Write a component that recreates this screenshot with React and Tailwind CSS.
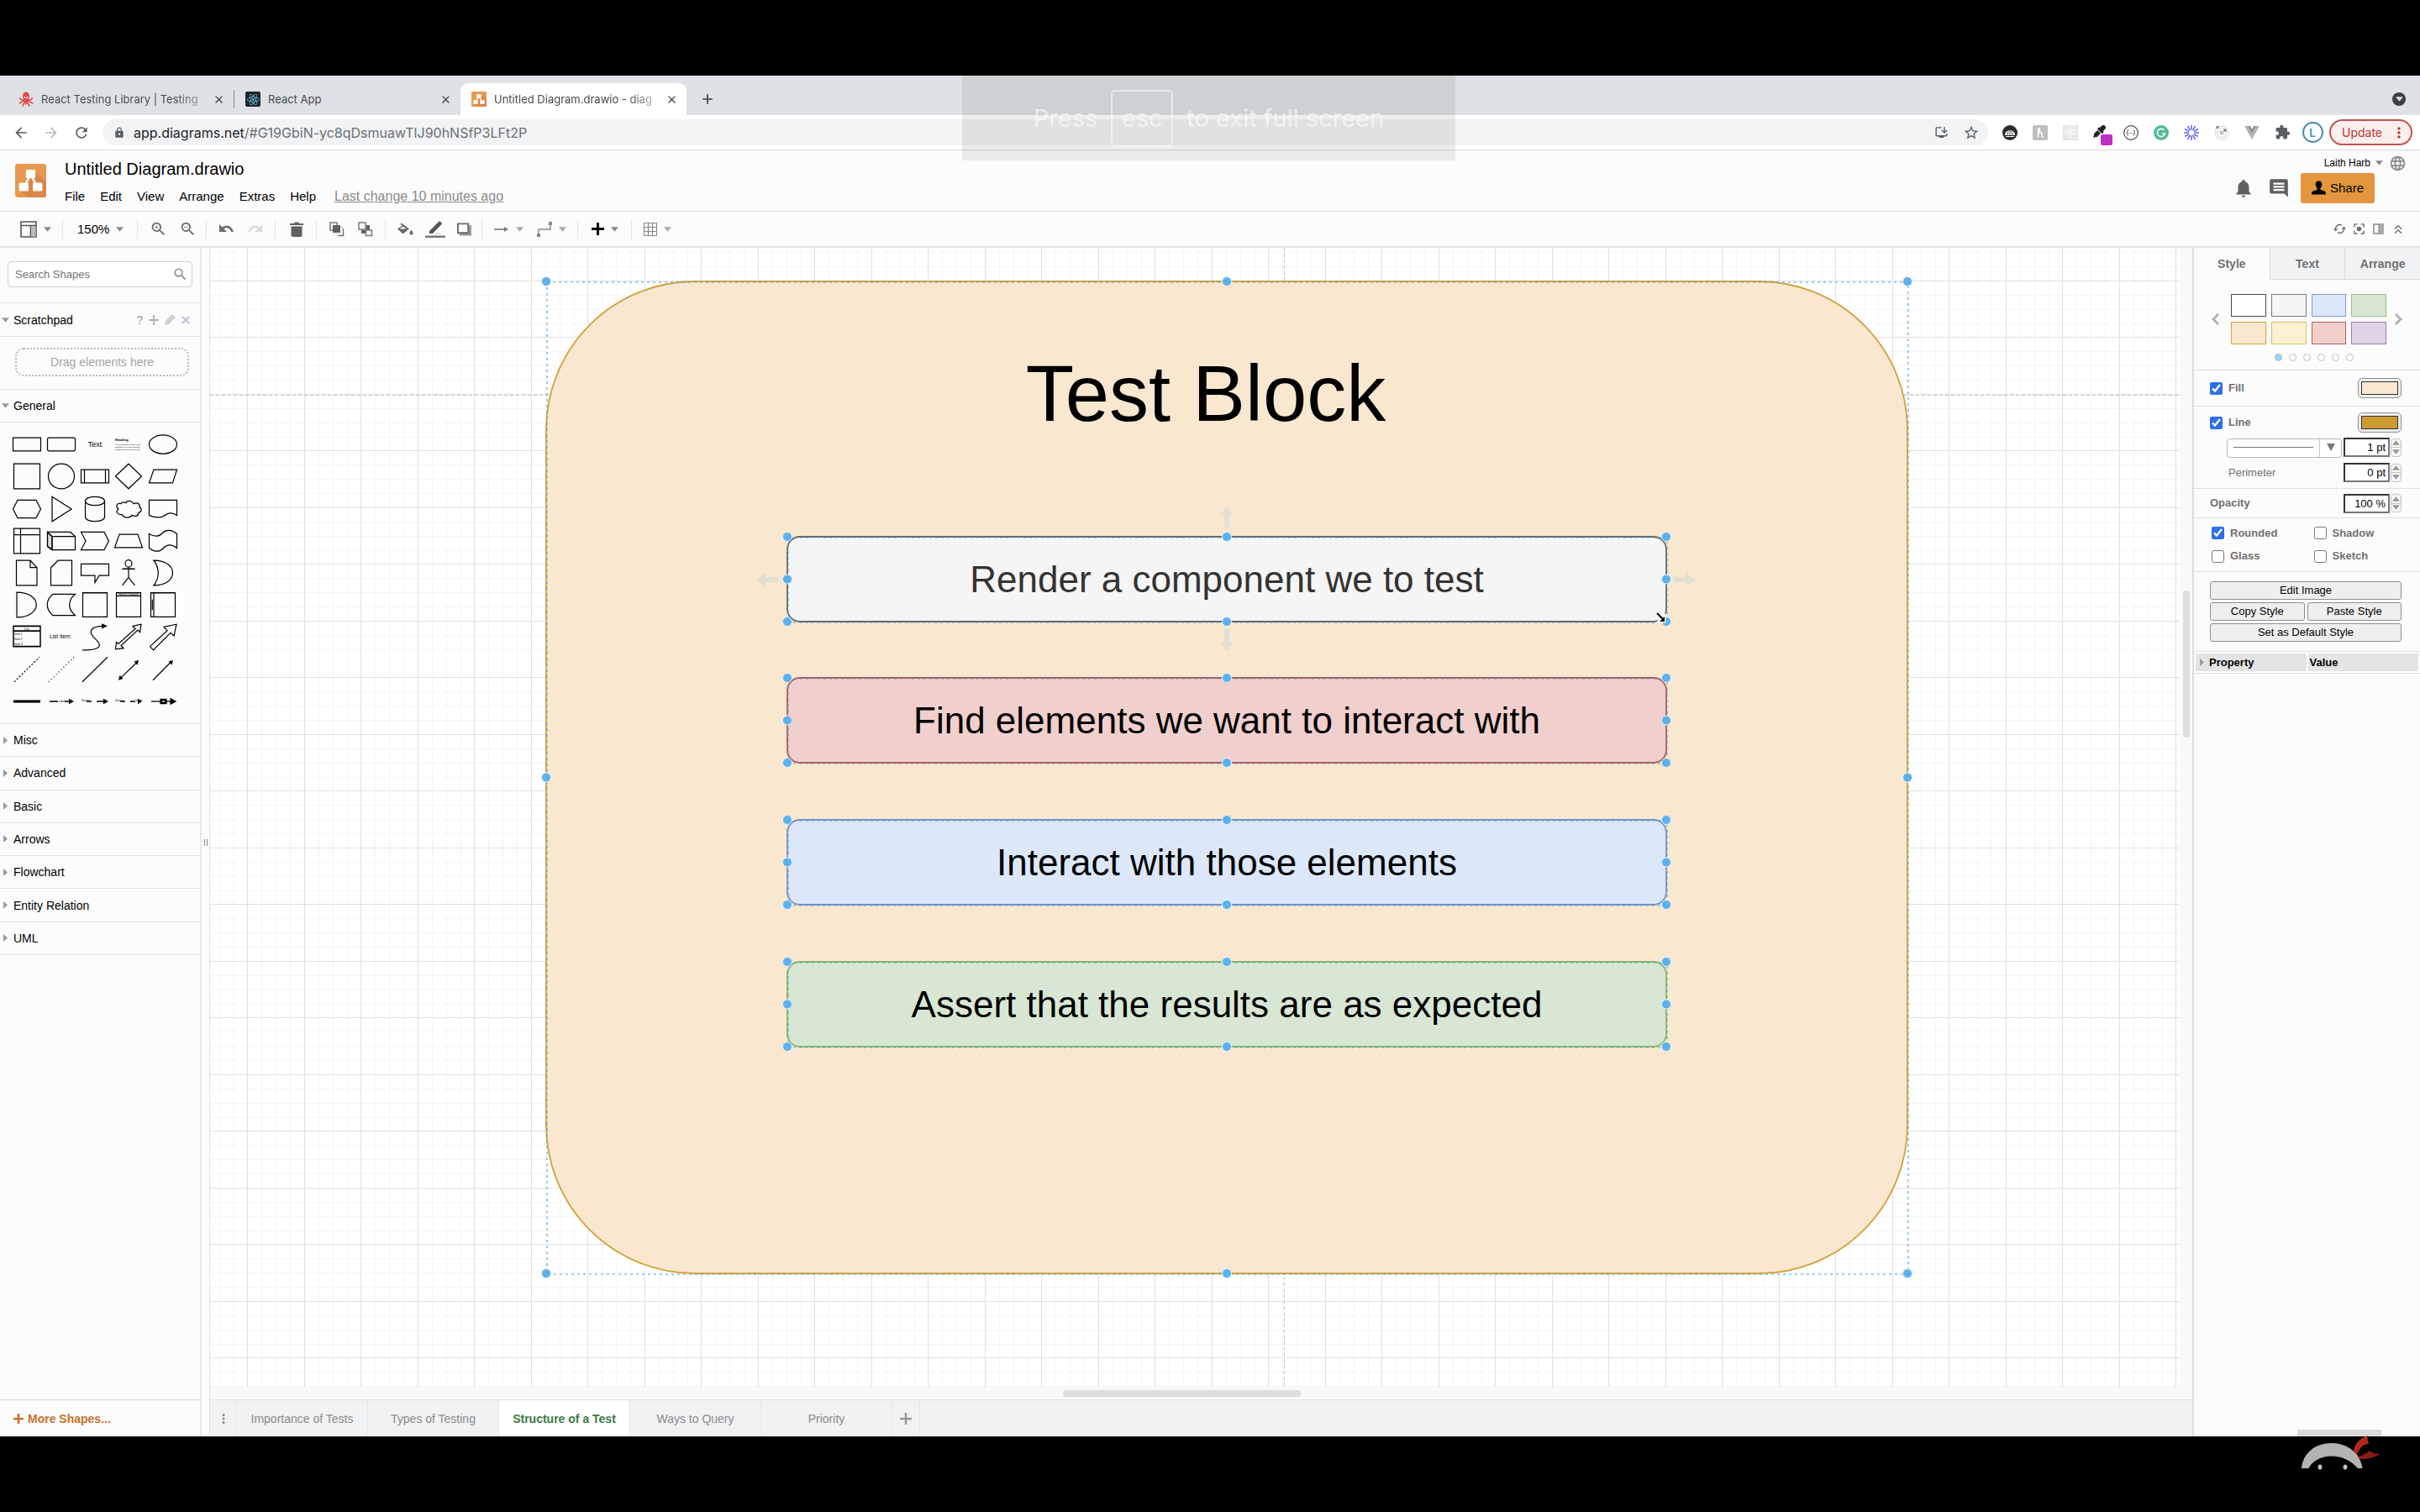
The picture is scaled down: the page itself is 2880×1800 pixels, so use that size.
import React from "react";
import {
  MdArrowBack, MdArrowForward, MdRefresh, MdLock, MdInstallDesktop, MdStarBorder, MdExtension,
  MdNotifications, MdLanguage, MdUndo, MdRedo, MdZoomIn, MdZoomOut, MdSync, MdCenterFocusStrong,
  MdKeyboardDoubleArrowUp, MdClose, MdAdd, MdMoreVert, MdSearch,
} from "react-icons/md";
import { FaReact, FaEyeDropper } from "react-icons/fa";

const chromeFont = "font-['Inter','Liberation_Sans',sans-serif]";
const pageFont = "font-['Liberation_Sans',sans-serif]";

function Caret({ className = "text-[#8a8a8a]" }) {
  return (
    <svg viewBox="0 0 10 6" className={`w-[9px] h-[6px] shrink-0 ${className}`}>
      <path d="M0 0h10L5 6z" fill="currentColor" />
    </svg>
  );
}

function DrawioLogo({ className }) {
  return (
    <svg viewBox="0 0 36 40" preserveAspectRatio="none" className={className}>
      <rect width="36" height="40" rx="3" fill="#e8994f" />
      <path d="M22 8l14 14v15a3 3 0 0 1-3 3H14L6 32l8-8 4-8z" fill="#d98748" />
      <path d="M18 13L10 28M18 13l8 15" stroke="#fff" strokeWidth="2.4" />
      <rect x="12.500" y="7" width="11" height="10" rx="1.500" fill="#fff" />
      <rect x="4.500" y="22.500" width="11" height="10" rx="1.500" fill="#fff" />
      <rect x="20.500" y="22.500" width="11" height="10" rx="1.500" fill="#fff" />
    </svg>
  );
}

function Octopus() {
  return (
    <svg viewBox="0 0 18 18" className="w-[18px] h-[18px] shrink-0" fill="none" stroke="#df4b4b" strokeWidth="1.6" strokeLinecap="round">
      <ellipse cx="9" cy="5.500" rx="4" ry="5" fill="#df4b4b" stroke="none" />
      <path d="M6.500 9C5 11 3 10 1.500 8M11.500 9c1.500 2 3.500 1 5-1M7 10c-1 3-4 2-5.500 4M11 10c1 3 4 2 5.500 4M8 10c0 4-2 4-3 7M10 10c0 4 2 4 3 7M9 10v5" />
      <circle cx="7.500" cy="7" r="0.900" fill="#fff" stroke="none" />
      <circle cx="10.500" cy="7" r="0.900" fill="#fff" stroke="none" />
    </svg>
  );
}

function BrowserTab({ icon, title, active, fade }) {
  return (
    <div className={`flex items-center w-[269px] h-[38px] pl-[13px] pr-[10px] gap-[9px] ${active ? "bg-white rounded-t-[9px]" : ""}`}>
      {icon}
      <span className={`flex-1 text-[13px] leading-[20px] text-[#45494d] whitespace-nowrap ${fade ? "[mask-image:linear-gradient(to_right,black_82%,rgb(0_0_0/0.3))]" : ""}`}>{title}</span>
      <button aria-label="Close tab" className="text-[#3c4043]"><MdClose size={15} /></button>
    </div>
  );
}

function Ext({ name, children }) {
  return <button aria-label={name} className="grid place-items-center w-[36px] h-[30px]">{children}</button>;
}

const rays = [0, 30, 60, 90, 120, 150, 180, 210, 240, 270, 300, 330];

function BrowserChrome() {
  return (
    <div className={chromeFont}>
      <div className="flex items-end h-[47px] bg-[#dee1e5] pl-[9px]">
        <BrowserTab icon={<Octopus />} title="React Testing Library | Testing" fade />
        <span className="w-px h-[22px] bg-[#85888c] mb-[8px]" />
        <BrowserTab
          icon={<span className="grid place-items-center w-[18px] h-[18px] shrink-0 rounded-[2px] bg-[#20232a] text-[#61cbe8]"><FaReact size={15} /></span>}
          title="React App"
        />
        <BrowserTab active fade icon={<DrawioLogo className="w-[18px] h-[18px] shrink-0" />} title="Untitled Diagram.drawio - diag" />
        <button aria-label="New tab" className="h-[38px] ml-[15px] text-[#3c4043]"><MdAdd size={20} /></button>
        <button aria-label="Search tabs" className="ml-auto mr-[17px] self-center mt-[9px] grid place-items-center w-[16px] h-[16px] rounded-full bg-[#3c4043]">
          <Caret className="text-[#dee1e5]" />
        </button>
      </div>

      <div className="flex items-center h-[42px] bg-white border-b border-[#dadcde]">
        <div className="flex items-center w-[122px] pl-[15px] gap-[16px] text-[#5a5e62]">
          <button aria-label="Back"><MdArrowBack size={20} /></button>
          <button aria-label="Forward" className="text-[#b9bbbd]"><MdArrowForward size={20} /></button>
          <button aria-label="Reload"><MdRefresh size={20} /></button>
        </div>
        <div className="flex flex-1 items-center h-[31px] rounded-full bg-[#f1f3f5] pl-[13px] pr-[10px] text-[#5a5e62]">
          <MdLock size={14} />
          <div className="flex-1 pl-[10px] text-[16px] leading-[20px] text-[#6b6f73]">
            <span className="text-[#202124]">app.diagrams.net</span>/#G19GbiN-yc8qDsmuawTlJ90hNSfP3LFt2P
          </div>
          <button aria-label="Install app" className="mr-[17px]"><MdInstallDesktop size={17} /></button>
          <button aria-label="Bookmark"><MdStarBorder size={20} /></button>
        </div>
        <div className="flex items-center pl-[8px]">
          <Ext name="Dome">
            <svg viewBox="0 0 18 18" className="w-[18px] h-[18px]">
              <circle cx="9" cy="9" r="9" fill="#2b2b2b" />
              <path d="M3 12a6 6 0 0 1 12 0z" fill="#fff" />
              <path d="M9 12V6M6 12l1-5M12 12l-1-5" stroke="#2b2b2b" strokeWidth="0.800" />
              <path d="M4 13.500h10" stroke="#fff" />
            </svg>
          </Ext>
          <Ext name="Honey">
            <svg viewBox="0 0 18 18" className="w-[18px] h-[18px]">
              <rect width="18" height="18" rx="2" fill="#bfbfbf" />
              <path d="M6.500 14.500V4.500q1.500-1.500 2 0T6.500 10c2-2.500 5-2 4.500.5s0 4 2 3" fill="none" stroke="#fff" strokeWidth="1.500" />
            </svg>
          </Ext>
          <Ext name="React tools"><span className="grid place-items-center w-[18px] h-[18px] bg-[#e4e4e4] text-white"><FaReact size={17} /></span></Ext>
          <Ext name="Color picker">
            <span className="relative w-[18px] h-[18px] text-[#222]">
              <FaEyeDropper size={15} />
              <span className="absolute left-[9px] top-[11px] w-[14px] h-[13px] rounded-[2px] bg-[#c030c0]" />
            </span>
          </Ext>
          <Ext name="JSON viewer">
            <svg viewBox="0 0 18 18" className="w-[18px] h-[18px]" fill="none" stroke="#4a4a4a">
              <circle cx="9" cy="9" r="8.300" strokeWidth="1.200" />
              <path d="M6 5.500c-1.500 0-.5 3-2 3.500 1.500.5.500 3.500 2 3.500M12 5.500c1.500 0 .5 3 2 3.500-1.500.5-.5 3.500-2 3.500M6.500 9.500h1M8.500 9.500h1M10.500 9.500h1" />
            </svg>
          </Ext>
          <Ext name="Grammar">
            <svg viewBox="0 0 18 18" className="w-[18px] h-[18px]" fill="none" stroke="#fff" strokeWidth="1.600">
              <circle cx="9" cy="9" r="9" fill="#4fbb97" stroke="none" />
              <path d="M12.500 6A4.600 4.600 0 1 0 13.500 10H10" />
            </svg>
          </Ext>
          <Ext name="Loom">
            <svg viewBox="0 0 18 18" className="w-[18px] h-[18px]" stroke="#625df5" strokeWidth="1.500">
              {rays.map((a) => <path key={a} d="M9 0v5.800" transform={`rotate(${a} 9 9)`} />)}
            </svg>
          </Ext>
          <Ext name="Orbit">
            <svg viewBox="0 0 18 18" className="w-[18px] h-[18px]" fill="none" stroke="#d3d3d3">
              <circle cx="9" cy="9" r="8" /><circle cx="9" cy="9" r="5.500" /><circle cx="9" cy="9" r="2.500" fill="#c4c4c4" />
              <circle cx="4" cy="2.500" r="1.800" fill="#8b8b8b" stroke="none" /><circle cx="13" cy="6" r="1.800" fill="#777" stroke="none" />
            </svg>
          </Ext>
          <Ext name="Vue tools">
            <svg viewBox="0 0 18 16" className="w-[18px] h-[16px]"><path d="M0 0h4l5 9 5-9h4L9 16z" fill="#b3b3b3" /><path d="M4 0h3l2 4 2-4h3L9 9z" fill="#8c8c8c" /></svg>
          </Ext>
          <Ext name="Extensions"><MdExtension size={19} className="text-[#5a5e62]" /></Ext>
          <Ext name="Profile">
            <span className="grid place-items-center w-[25px] h-[25px] rounded-full border-2 border-[#4d8cad] text-[13px] leading-[16px] text-[#3aa0cf] font-bold">L</span>
          </Ext>
        </div>
        <button className="flex items-center h-[31px] w-[99px] ml-[2px] mr-[9px] pl-[13px] pr-[4px] justify-between rounded-full border-2 border-[#c0564f] bg-[#fbeeee] text-[14px] leading-[20px] text-[#b93a32]">
          Update<MdMoreVert size={20} />
        </button>
      </div>
    </div>
  );
}

function Header() {
  return (
    <header className="flex items-start h-[73px] border-b border-[#dcdcdc] bg-[#fcfcfc] pl-[18px]">
      <DrawioLogo className="w-[37px] h-[40px] mt-[16px]" />
      <div className="pl-[22px] pt-[10px]">
        <h1 className="text-[20px] leading-[24px] text-black">Untitled Diagram.drawio</h1>
        <nav className="flex gap-[18px] pt-[12px] text-[15px] leading-[18px] text-black">
          {["File", "Edit", "View", "Arrange", "Extras", "Help"].map((m) => <button key={m}>{m}</button>)}
          <a href="#history" className="pl-[4px] text-[16px] text-[#8a8a8a] underline">Last change 10 minutes ago</a>
        </nav>
      </div>
      <div className="ml-auto mr-[16px] pt-[5px]">
        <div className="flex items-center justify-end gap-[7px] h-[20px] text-[#8a8a8a]">
          <button className="flex items-center gap-[6px] text-[12px] leading-[16px] text-black">Laith Harb<Caret /></button>
          <button aria-label="Language"><MdLanguage size={21} /></button>
        </div>
        <div className="flex items-center h-[36px] mt-[2px] mr-[38px] text-[#606060]">
          <button aria-label="Notifications"><MdNotifications size={26} /></button>
          <button aria-label="Comments" className="ml-[16px] mr-[13px]">
            <svg viewBox="0 0 24 24" className="w-[26px] h-[26px]"><path fill="currentColor" d="M22 22V4q0-2-2-2H4Q2 2 2 4v12q0 2 2 2h14zM6 6v2h12V6zm0 3.500v2h12v-2zM6 13v2h12v-2z" fillRule="evenodd" /></svg>
          </button>
          <button className="flex items-center justify-center gap-[5px] w-[88px] h-[36px] rounded-[3px] bg-[#e3963e] text-[15px] leading-[18px] text-black">
            <svg viewBox="0 0 18 18" className="w-[17px] h-[18px]"><path d="M9 0c3 0 4.200 2 4 4.800-.2 2.200-1.200 3.500-2 4.600v1.400l5 2c1.500.6 2 1.800 2 4.200H0c0-2.400.5-3.600 2-4.200l5-2V9.400C6.200 8.300 5.200 7 5 4.800 4.800 2 6 0 9 0z" /></svg>
            Share
          </button>
        </div>
      </div>
    </header>
  );
}

function ToolGroup({ className, children, last }) {
  return <div className={`flex items-center h-[23px] ${last ? "" : "border-r border-[#e4e4e4]"} ${className}`}>{children}</div>;
}

function Tool({ name, children }) {
  return <button aria-label={name} className="flex items-center gap-[8px]">{children}</button>;
}

function Toolbar() {
  return (
    <div className="flex items-center h-[43px] border-b-2 border-[#e2e2e4] bg-[#fcfcfc] text-[#6b6b6b]">
      <ToolGroup className="w-[75px] pl-[24px]">
        <Tool name="View">
          <svg viewBox="0 0 20 20" className="w-[20px] h-[20px]" fill="none" stroke="#555" strokeWidth="1.600"><path d="M1 1h18v18H1zM1 5.500h18M12.500 5.500V19" /><path d="M13 6h5.500v12.500H13z" fill="#bbb" stroke="none" /></svg>
          <Caret />
        </Tool>
      </ToolGroup>
      <ToolGroup className="w-[89px] pl-[17px]">
        <button className="flex items-center gap-[8px] text-[15px] leading-[18px] text-black">150%<Caret /></button>
      </ToolGroup>
      <ToolGroup className="w-[82px] justify-center gap-[14px] pl-[2px]">
        <Tool name="Zoom in"><MdZoomIn size={21} /></Tool>
        <Tool name="Zoom out"><MdZoomOut size={21} /></Tool>
      </ToolGroup>
      <ToolGroup className="w-[82px] justify-center gap-[14px]">
        <Tool name="Undo"><svg viewBox="0 0 18 14" className="w-[18px] h-[14px]"><path d="M1 1v9h9L6.500 6.500C9 4.500 13 4 15.500 10.500L18 9.500C15 1.500 8 1.500 4.500 4.500z" fill="#6b6b6b" /></svg></Tool>
        <Tool name="Redo"><svg viewBox="0 0 18 14" className="w-[18px] h-[14px] ml-[3px]"><path d="M17 1v9H8l3.500-3.500C9 4.500 5 4 2.500 10.500L0 9.500C3 1.500 10 1.500 13.500 4.500z" fill="#dadada" /></svg></Tool>
      </ToolGroup>
      <ToolGroup className="w-[49px] justify-center pl-[2px]">
        <Tool name="Delete">
          <svg viewBox="0 0 18 18" className="w-[18px] h-[18px]"><path fill="#606060" d="M1 2h5l1-1.500h4L12 2h5v2H1zM2.500 5.500h13V16q0 2-2 2h-9q-2 0-2-2z" /></svg>
        </Tool>
      </ToolGroup>
      <ToolGroup className="w-[82px] justify-center gap-[16px]">
        <Tool name="To front">
          <svg viewBox="0 0 18 18" className="w-[18px] h-[18px]" fill="none" stroke="#777" strokeWidth="1.500"><path d="M1 1h8v9H1z" /><path d="M4 4h9v9H4z" fill="#606060" stroke="none" /><path d="M15 7v-1M10 16.500h6.500V8" /></svg>
        </Tool>
        <Tool name="To back">
          <svg viewBox="0 0 18 18" className="w-[18px] h-[18px]" fill="none" stroke="#777" strokeWidth="1.500"><path d="M1 1h8v8H1z" fill="#fcfcfc" /><path d="M10 4h4v6h-4zM4 10h5v4H4z" fill="#606060" stroke="none" /><path d="M9.500 10h7v6.500h-7z" fill="#fcfcfc" /></svg>
        </Tool>
      </ToolGroup>
      <ToolGroup className="w-[115px] justify-center gap-[14px]">
        <Tool name="Fill color"><svg viewBox="0 0 24 18" className="w-[20px] h-[18px]"><path fill="#6b6b6b" d="M7 0l11 8.500L9 15.500 1 8.500 8 4 5.500 1.500zM4 8.500h10L9 5zM21 10s2.500 3 2.500 4.500a2.500 2.500 0 0 1-5 0C18.500 13 21 10 21 10z" fillRule="evenodd" /></svg></Tool>
        <Tool name="Line color"><svg viewBox="0 0 24 20" className="w-[24px] h-[20px]"><path fill="#555" d="M5 15v-3L16 1q1-1 2 0l1.500 1q1 1 0 2L9 15z" /><path fill="#bbb" d="M12 14.500h7v1h-8z" /><path fill="#777" d="M0 17.500h24V20H0z" /></svg></Tool>
        <Tool name="Shadow"><svg viewBox="0 0 18 16" className="w-[17px] h-[16px]"><path fill="#999" d="M3 3h15v13H3z" /><path fill="#fcfcfc" stroke="#6b6b6b" strokeWidth="2" d="M1 1h13v11.500H1z" /></svg></Tool>
      </ToolGroup>
      <ToolGroup className="w-[114px] justify-center gap-[16px]">
        <Tool name="Connection"><svg viewBox="0 0 18 10" className="w-[18px] h-[10px]"><path d="M0 5h15" stroke="#777" strokeWidth="1.600" /><path d="M12 2l5 3-5 3z" fill="#777" /></svg><Caret className="text-[#aaa]" /></Tool>
        <Tool name="Waypoints"><svg viewBox="0 0 18 18" className="w-[18px] h-[18px]"><path d="M2 16V9h14V2" fill="none" stroke="#888" strokeWidth="1.400" /><path d="M0 14h4v4H0zM14 0h4v4h-4z" fill="#888" /></svg><Caret className="text-[#aaa]" /></Tool>
      </ToolGroup>
      <ToolGroup className="w-[64px] justify-center">
        <Tool name="Insert"><svg viewBox="0 0 15 15" className="w-[15px] h-[15px]"><path d="M7.500 0v15M0 7.500h15" stroke="#000" strokeWidth="3" /></svg><Caret /></Tool>
      </ToolGroup>
      <ToolGroup last className="w-[64px] pl-[14px]">
        <Tool name="Table"><svg viewBox="0 0 16 16" className="w-[16px] h-[16px]"><path d="M.500.500h15v15H.500zM.500 5.500h15M.500 10.500h15M5.500.500v15M10.500.500v15" fill="none" stroke="#888" strokeWidth="1.200" /></svg><Caret className="text-[#aaa]" /></Tool>
      </ToolGroup>
      <div className="flex items-center gap-[6px] ml-auto mr-[17px]">
        <Tool name="Synchronize"><MdSync size={17} className="rotate-90" /></Tool>
        <Tool name="Fullscreen"><MdCenterFocusStrong size={17} /></Tool>
        <Tool name="Format panel"><svg viewBox="0 0 17 17" className="w-[17px] h-[17px]"><path d="M3 3h11v11H3z" fill="none" stroke="#888" strokeWidth="1.400" /><path d="M9 3h4.500v11H9z" fill="#aaa" /><path d="M9 3v11" stroke="#777" /></svg></Tool>
        <Tool name="Collapse"><MdKeyboardDoubleArrowUp size={18} /></Tool>
      </div>
    </div>
  );
}

// Each entry: accessible name, outline art in a 40 x 36 box, and optional lettering in a 40 x 38 box.
const shapes = [
  ["Rectangle", <path d="M3.500 10.500h33v15h-33z" />],
  ["Rounded rectangle", <rect x="3.500" y="10.500" width="33" height="15" rx="2" />],
  ["Text", null, <text x="20" y="22" textAnchor="middle" fontSize="9">Text</text>],
  ["Textbox", null, <g><text x="4" y="15" fontSize="4" fontWeight="bold">Heading</text><text x="4" y="20" fontSize="2">Lorem ipsum dolor sit amet, conse</text><text x="4" y="23" fontSize="2">adipisicing elit, sed do eiusmod te</text><text x="4" y="26" fontSize="2">incididunt ut labore et dolore mag</text></g>],
  ["Ellipse", <ellipse cx="20" cy="18" rx="16.500" ry="10.500" />],
  ["Square", <path d="M4.500 4h31v28h-31z" />],
  ["Circle", <ellipse cx="20" cy="18" rx="15.500" ry="14" />],
  ["Process", <path d="M3.500 10.500h33v15h-33zM7.500 10.500v15M32.500 10.500v15" />],
  ["Diamond", <path d="M20 4l15.500 14L20 32 4.500 18z" />],
  ["Parallelogram", <path d="M9 10.500h27.500l-5 15H3.500z" />],
  ["Hexagon", <path d="M9 8h22l5.500 10L31 28H9L3.500 18z" />],
  ["Triangle", <path d="M9 4l23 14L9 32z" />],
  ["Cylinder", <path d="M8.500 9v18c0 6.500 23 6.500 23 0V9c0-6.500-23-6.500-23 0c0 6.500 23 6.500 23 0" />],
  ["Cloud", <path d="M11 12C6 11 4 15 8 18c-4 3-1 7 4 6 3 5 10 4 12 1 4 2 8 1 8-3 4-1 4-5 1-6 1-4-3-6-7-4-3-4-8-4-9-1-3-1-5-1-6 1z" />],
  ["Document", <path d="M3.500 8h33v17c-8-5-12-1-16 1s-11 2-17-1z" />],
  ["Internal storage", <path d="M4.500 4h31v28h-31zM4.500 11h31M12.500 4v28" />],
  ["Cube", <g><path d="M3.500 8l5.500 5v15l-5.500-4z" fill="#ddd" /><path d="M3.500 8H31l5.500 5v15H9l-5.500-4zM9 28V13L3.500 8M9 13h27.500" /></g>],
  ["Step", <path d="M3.500 8H31l5.500 10L31 28H3.500L9 18z" />],
  ["Trapezoid", <path d="M9 10.500h22l5.500 15h-33z" />],
  ["Tape", <path d="M3.500 10c7 4 12 3 16-1s11-4 17 1v16c-7-5-12-4-16 0s-10 5-17 0z" />],
  ["Note", <path d="M7.500 4H24l8 8v20H7.500zM24 4v8h8" />],
  ["Card", <path d="M16 4h16.500v28h-25V12z" />],
  ["Callout", <path d="M3.500 8h33v13H25l-5 8v-8H3.500z" />],
  ["Actor", <g><circle cx="20" cy="7.500" r="4" /><path d="M20 11.500V23M12.500 13.500h15M20 23l-7.500 9M20 23l7.500 9" /></g>],
  ["Or", <path d="M9 4c30 0 30 28 0 28 7-8 7-20 0-28z" />],
  ["And", <path d="M8 4c31 0 31 28 0 28z" />],
  ["Data storage", <path d="M10 6h26.500c-9 7-9 17 0 24H10C1 23 1 13 10 6z" />],
  ["Container", <path d="M5.500 4.500h29v27h-29z" />],
  ["Vertical container", <path d="M5.500 4.500h29v27h-29zM5.500 8h29" />, <text x="20" y="8" fontSize="3" textAnchor="middle">Vertical Container</text>],
  ["Horizontal container", <path d="M5.500 4.500h29v27h-29zM9 4.500v27M7.300 12v12" />],
  ["List", <path d="M4 6h32v23H4zM4 11.500h32" strokeWidth="1.500" />, <g fontSize="3.500"><text x="17" y="10.500">List</text><text x="5" y="17">Item 1</text><text x="5" y="23">Item 2</text><text x="5" y="29">Item 3</text></g>],
  ["List item", null, <text x="6" y="21" fontSize="6.500">List Item</text>],
  ["Curve", <g><path d="M5 33c32 0 18-10 13-15s-4-12 12-12" /><path d="M28 3l7 3-7 3z" fill="#000" stroke="none" /></g>],
  ["Bidirectional arrow", <path d="M4.500 32l1-8 2.500 2L28 9l-3-3 10-2-1.500 9-2.500-2.500L11 28l3 3z" />],
  ["Arrow", <path d="M4.500 29L25 11l-4-4 15-3-3 13-4-3.500L8.500 33z" />],
  ["Dashed line", <path d="M5 32L35 4" strokeDasharray="2 2" />],
  ["Dotted line", <path d="M5 32L35 4" strokeDasharray="1 3" />],
  ["Line", <path d="M5 32L35 4" />],
  ["Bidirectional connector", <g><path d="M9 29L31 9" /><path d="M8 30l1.500-5.500 4 4zM32 7.500l-1.500 5.500-4-4z" fill="#000" stroke="none" /></g>],
  ["Directional connector", <g><path d="M8 30L30 9" /><path d="M32 7.500l-1.500 5.500-4-4z" fill="#000" stroke="none" /></g>],
  ["Link", <path d="M4 18h32" strokeWidth="3" />],
  ["Connector with label", <g><path d="M6 18h10M24 18h6" /><path d="M29 15l6 3-6 3z" fill="#000" stroke="none" /></g>, <text x="17" y="20" fontSize="3">Label</text>],
  ["Connector with 2 labels", <g><path d="M10 18h6M22 18h8" /><path d="M30 15l6 3-6 3z" fill="#000" stroke="none" /></g>, <text x="4" y="19" fontSize="3">Source</text>],
  ["Connector with 3 labels", <g><path d="M10 18h6M22 18h6" /><path d="M31 15l5 3-5 3z" fill="#000" stroke="none" /></g>, <g fontSize="3"><text x="4" y="19">Source</text><text x="28" y="19">Target</text></g>],
  ["Connector with symbol", <g><path d="M6 18h26" /><path d="M29 15l6 3-6 3zM17 15.500h7v5h-7z" fill="#000" /><path d="M19 18h3" stroke="#fff" /></g>],
];

function OpenHeading({ children, extra, className }) {
  return (
    <div className={`flex items-center pl-[2px] pr-[12px] border-y border-[#e4e4e4] ${className}`}>
      <button className="flex items-center gap-[5px] text-[14px] leading-[18px] text-black"><Caret className="text-[#9a9a9a]" />{children}</button>
      {extra}
    </div>
  );
}

function Sidebar() {
  return (
    <aside className="flex flex-col w-[240px] shrink-0 border-r-2 border-[#e8e8e8] bg-[#fcfcfc]">
      <div className="pl-[9px] pr-[9px] pt-[16px] pb-[18px]">
        <div className="flex items-center h-[31px] rounded-[4px] border border-[#cfcfcf] bg-white pl-[8px] pr-[4px]">
          <input aria-label="Search Shapes" placeholder="Search Shapes" className="flex-1 min-w-0 text-[13px] leading-[16px] outline-none placeholder:text-[#757575]" />
          <button aria-label="Search" className="text-[#8f8f8f]"><MdSearch size={19} /></button>
        </div>
      </div>
      <OpenHeading
        className="h-[41px]"
        extra={
          <div className="flex items-center gap-[7px] ml-auto text-[#9a9a9a]">
            <button aria-label="Help" className="text-[14px] leading-[16px]">?</button>
            <button aria-label="Add"><svg viewBox="0 0 12 12" className="w-[12px] h-[12px]"><path d="M6 0v12M0 6h12" stroke="#b5b5b5" strokeWidth="2" /></svg></button>
            <button aria-label="Edit"><svg viewBox="0 0 13 13" className="w-[13px] h-[13px]"><path d="M1 12l1-4 7-7 3 3-7 7zM3 9l6-6M4 10l6-6" fill="none" stroke="#a5a5a5" /></svg></button>
            <button aria-label="Close"><svg viewBox="0 0 10 10" className="w-[10px] h-[10px]"><path d="M1 1l8 8M9 1L1 9" stroke="#b9c7dd" strokeWidth="2" /></svg></button>
          </div>
        }
      >
        Scratchpad
      </OpenHeading>
      <div className="pt-[13px] pb-[15px] pl-[18px] pr-[13px]">
        <div className="grid place-items-center h-[34px] rounded-[10px] border-2 border-dotted border-[#b8b8b8] text-[14px] leading-[18px] text-[#a3a3a3]">Drag elements here</div>
      </div>
      <OpenHeading className="h-[40px]">General</OpenHeading>
      <div className="pt-[7px] pb-[7px] pl-[12px]">
        <div className="grid grid-cols-5 grid-rows-9 w-[202px] h-[344px]">
          {shapes.map(([name, art, lettering]) => (
            <button key={name} aria-label={name} className="grid place-items-center">
              <svg viewBox="0 0 40 38" className="w-[40px] h-[38px]">
                <g transform="scale(1 1.056)" fill="none" stroke="#000" strokeWidth="1.200">{art}</g>
                <g fill="#000">{lettering}</g>
              </svg>
            </button>
          ))}
        </div>
      </div>
      <div className="grid grid-rows-7 h-[276px] border-t border-[#e4e4e4]">
        {["Misc", "Advanced", "Basic", "Arrows", "Flowchart", "Entity Relation", "UML"].map((s) => (
          <button key={s} className="flex items-center gap-[7px] pl-[4px] border-b border-[#e4e4e4] text-[14px] leading-[18px] text-black">
            <svg viewBox="0 0 5 9" className="w-[5px] h-[9px]"><path d="M0 0l5 4.500L0 9z" fill="#9a9a9a" /></svg>{s}
          </button>
        ))}
      </div>
      <button className="flex items-center gap-[5px] mt-auto h-[44px] pl-[16px] border-t border-[#dadada] text-[14px] leading-[18px] font-bold text-[#c8702c]">
        <svg viewBox="0 0 12 12" className="w-[12px] h-[12px]"><path d="M6 0v12M0 6h12" stroke="#c8702c" strokeWidth="2.600" /></svg>
        More Shapes...
      </button>
    </aside>
  );
}

function CanvasNode({ w, h, fill, stroke, place, children }) {
  const handles = [[0, 0], [w / 2, 0], [w, 0], [0, h / 2], [w, h / 2], [0, h], [w / 2, h], [w, h]];
  return (
    <div className={`absolute grid place-items-center ${place}`}>
      <svg className="absolute inset-0 w-full h-full overflow-visible" fill="none">
        <rect width={w} height={h} rx={Math.round(Math.min(w, h) * 0.15)} fill={fill} stroke={stroke} strokeWidth="1.800" />
        <rect x="1" y="1" width={w} height={h} stroke="#4da3da" strokeWidth="1.100" strokeDasharray="3 4" />
        {handles.map(([x, y]) => <circle key={`${x},${y}`} cx={x} cy={y} r="5.500" fill="#5cb1ec" stroke="#e4f1fa" />)}
      </svg>
      <span className="relative text-[44px] leading-[52px] whitespace-nowrap">{children}</span>
    </div>
  );
}

function HintArrow({ place }) {
  return <svg viewBox="0 0 26 16" className={`absolute w-[26px] h-[16px] ${place}`}><path d="M0 5h15V0l11 8-11 8v-5H0z" fill="#e2dfd0" /></svg>;
}

function Canvas() {
  return (
    <div className="relative flex-1 min-w-0 bg-white overflow-hidden">
      <svg className="absolute inset-0 w-full h-full">
        <defs>
          <pattern id="grid" x="112" y="39" width="135" height="135" patternUnits="userSpaceOnUse">
            <path d="M17 0v135M34 0v135M51 0v135M84 0v135M101 0v135M118 0v135M0 17h135M0 34h135M0 51h135M0 84h135M0 101h135M0 118h135" transform="translate(.5 .5)" stroke="#f4f4f4" fill="none" />
            <path d="M0 0v135M67 0v135M0 0h135M0 67h135" transform="translate(.5 .5)" stroke="#e0e0e0" fill="none" />
          </pattern>
        </defs>
        <rect width="100%" height="100%" fill="url(#grid)" />
        <path d="M0 175.500H2400M1278.500 0V1400" stroke="#c4c4c4" strokeDasharray="4 3" />
      </svg>
      <CanvasNode w={1620} h={1181} fill="#fae7d0" stroke="#cfa23a" place="left-[400px] top-[40px] w-[1620px] h-[1181px]" />
      <h2 className="absolute left-[885px] top-[120px] w-[600px] text-center text-[94px] leading-[108px] text-black">Test Block</h2>
      <CanvasNode w={1046} h={101} fill="#f5f5f5" stroke="#666666" place="left-[687px] top-[344px] w-[1046px] h-[101px] text-[#333333]">Render a component we to test</CanvasNode>
      <CanvasNode w={1046} h={101} fill="#f1cfcd" stroke="#b05a56" place="left-[687px] top-[512px] w-[1046px] h-[101px] text-black">Find elements we want to interact with</CanvasNode>
      <CanvasNode w={1046} h={101} fill="#dce7fa" stroke="#7391c2" place="left-[687px] top-[681px] w-[1046px] h-[101px] text-black">Interact with those elements</CanvasNode>
      <CanvasNode w={1046} h={101} fill="#d8e7d4" stroke="#86b56a" place="left-[687px] top-[850px] w-[1046px] h-[101px] text-black">Assert that the results are as expected</CanvasNode>
      <HintArrow place="left-[650px] top-[387px] rotate-180" />
      <HintArrow place="left-[1742px] top-[387px]" />
      <HintArrow place="left-[1197px] top-[312px] -rotate-90" />
      <HintArrow place="left-[1197px] top-[459px] rotate-90" />
      <svg viewBox="0 0 12 12" className="absolute left-[1721px] top-[434px] w-[12px] h-[12px] overflow-visible"><path d="M1 1l7 7M10 4v7H3z" stroke="#fff" strokeWidth="3" fill="#fff" /><path d="M1 1l7 7" stroke="#000" strokeWidth="2" /><path d="M10 5v6H4z" fill="#000" /></svg>
    </div>
  );
}

function PageTabs() {
  const pages = ["Importance of Tests", "Types of Testing", "Structure of a Test", "Ways to Query", "Priority"];
  return (
    <div className="flex h-[44px] border-t border-[#dfe0e2] bg-[#f1f2f4] text-[#8a8a8a]">
      <button aria-label="Pages" className="grid place-items-center w-[32px] border-r border-[#e6e7e9]"><MdMoreVert size={18} /></button>
      {pages.map((p) => (
        <button key={p} className={`w-[156px] border-r border-[#e6e7e9] text-[14px] leading-[18px] ${p === "Structure of a Test" ? "bg-white font-bold text-[#3a7a3f]" : ""}`}>{p}</button>
      ))}
      <button aria-label="Insert page" className="grid place-items-center w-[33px] border-r border-[#e6e7e9]"><svg viewBox="0 0 14 14" className="w-[14px] h-[14px]"><path d="M7 0v14M0 7h14" stroke="#999" strokeWidth="2.400" /></svg></button>
    </div>
  );
}

function Workspace() {
  return (
    <main className="flex flex-col flex-1 min-w-0">
      <div className="flex flex-1 min-h-0">
        <Canvas />
        <div className="w-[15px] bg-[#f8f9fb] pl-[4px] pt-[408px]"><div className="w-[8px] h-[175px] rounded-full bg-[#dddee0]" /></div>
      </div>
      <div className="h-[15px] bg-[#f8f9fb] pt-[4px] flex justify-center pr-[46px]"><div className="w-[283px] h-[8px] rounded-full bg-[#dddee0]" /></div>
      <PageTabs />
    </main>
  );
}

const swatches = [
  ["White", "bg-white border-[#4a4a4a]"], ["Gray", "bg-[#f5f5f5] border-[#7a7a7a]"], ["Blue", "bg-[#dce7fa] border-[#7f9cc8]"], ["Green", "bg-[#d8e7d4] border-[#96bf80]"],
  ["Orange", "bg-[#fae7d0] border-[#d3a63f]"], ["Yellow", "bg-[#fcf1d0] border-[#d8bf6a]"], ["Red", "bg-[#f1cfcd] border-[#b45f5b]"], ["Purple", "bg-[#dfd5e6] border-[#9c7cae]"],
];

function Check({ label, checked }) {
  return (
    <label className="flex items-center gap-[7px] text-[13px] leading-[16px] font-bold text-[#707070]">
      <input type="checkbox" defaultChecked={checked} className="w-[15px] h-[15px] accent-[#2f6fed]" />
      {label}
    </label>
  );
}

function ColorButton({ name, className }) {
  return (
    <button aria-label={name} className="ml-auto w-[52px] h-[24px] p-[3px] rounded-[5px] border border-[#8f8f8f] bg-[#ededed]">
      <span className={`block h-full border border-[#333] ${className}`} />
    </button>
  );
}

function Stepper({ label, value }) {
  return (
    <div className="flex items-center gap-[1px] ml-auto">
      <input aria-label={label} defaultValue={value} className="w-[55px] h-[23px] px-[3px] border-2 border-t-[#333] border-l-[#333] border-r-[#777] border-b-[#777] bg-white text-right text-[13px] leading-[16px] text-black" />
      <div className="flex flex-col w-[13px] h-[22px] rounded-[4px] border border-[#c4c4c4] bg-[#f7f7f7]">
        <button aria-label={`Increase ${label}`} className="grid place-items-center flex-1 border-b border-[#c4c4c4]"><Caret className="rotate-180 text-[#999]" /></button>
        <button aria-label={`Decrease ${label}`} className="grid place-items-center flex-1"><Caret className="text-[#999]" /></button>
      </div>
    </div>
  );
}

function FormatPanel() {
  const btn = "h-[22px] rounded-[3px] border border-[#8f8f8f] bg-[#efefef] text-[13px] leading-[16px] text-black";
  return (
    <aside className="flex flex-col w-[271px] shrink-0 border-l-2 border-[#dcdde0] bg-[#fcfcfc] text-[#707070]">
      <div className="grid grid-cols-3 h-[38px] text-[14px] leading-[18px] font-bold">
        <button>Style</button>
        <button className="border-l border-b border-[#d5d6d9] bg-[#f1f2f4]">Text</button>
        <button className="border-l border-b border-[#d5d6d9] bg-[#f1f2f4]">Arrange</button>
      </div>
      <div className="h-[108px] border-b border-[#dedede] pt-[17px]">
        <div className="flex items-center pl-[14px] pr-[14px] text-[#b0b0b0]">
          <button aria-label="Previous styles" className="grid place-items-center w-[24px] h-[24px]"><svg viewBox="0 0 10 14" className="w-[10px] h-[14px]"><path d="M8 1L2 7l6 6" fill="none" stroke="currentColor" strokeWidth="2.800" /></svg></button>
          <div className="grid grid-cols-4 gap-[6px] flex-1 pl-[6px] pr-[2px]">
            {swatches.map(([n, c]) => <button key={n} aria-label={n} className={`h-[27px] border ${c}`} />)}
          </div>
          <button aria-label="Next styles" className="grid place-items-center w-[24px] h-[24px]"><svg viewBox="0 0 10 14" className="w-[10px] h-[14px]"><path d="M2 1l6 6-6 6" fill="none" stroke="currentColor" strokeWidth="2.800" /></svg></button>
        </div>
        <div className="flex justify-center gap-[8px] pt-[11px] pl-[17px]">
          {[1, 2, 3, 4, 5, 6].map((n) => (
            <button key={n} aria-label={`Style page ${n}`} className={`w-[9px] h-[9px] rounded-full border border-[#bdbdbd] ${n === 1 ? "bg-[#9ad4f7]" : "bg-white"}`} />
          ))}
        </div>
      </div>
      <div className="flex items-center h-[43px] pl-[19px] pr-[22px] border-b border-[#dedede]">
        <Check label="Fill" checked />
        <ColorButton name="Fill color" className="bg-[#fae7d0]" />
      </div>
      <div className="pl-[19px] pr-[22px] pt-[6px] h-[98px] border-b border-[#dedede]">
        <div className="flex items-center h-[26px]">
          <Check label="Line" checked />
          <ColorButton name="Line color" className="bg-[#cc9c33]" />
        </div>
        <div className="flex items-center h-[33px] pl-[20px]">
          <div className="relative w-[137px] h-[23px]">
            <select aria-label="Line style" className="w-full h-full appearance-none rounded-[4px] border border-[#b5b5b5] bg-white text-transparent text-[13px]"><option>Solid</option></select>
            <span className="absolute left-[8px] top-[11px] w-[95px] h-px bg-[#777] pointer-events-none" />
            <span className="absolute right-[26px] top-0 w-px h-[23px] bg-[#c9c9c9] pointer-events-none" />
            <svg viewBox="0 0 10 9" className="absolute right-[8px] top-[7px] w-[10px] h-[9px] pointer-events-none"><path d="M0 0h10L5 9z" fill="#777" /></svg>
          </div>
          <Stepper label="Line width" value="1 pt" />
        </div>
        <div className="flex items-center h-[27px] pl-[22px] text-[13px] leading-[16px]">
          Perimeter
          <Stepper label="Perimeter" value="0 pt" />
        </div>
      </div>
      <div className="flex items-center h-[35px] pl-[19px] pr-[22px] border-b border-[#dedede] text-[13px] leading-[16px] font-bold">
        Opacity
        <div className="ml-auto font-normal"><Stepper label="Opacity" value="100 %" /></div>
      </div>
      <div className="grid grid-cols-2 h-[64px] pl-[21px] pr-[5px] pt-[4px] pb-[4px] border-b border-[#dedede]">
        <Check label="Rounded" checked /><Check label="Shadow" />
        <Check label="Glass" /><Check label="Sketch" />
      </div>
      <div className="grid grid-cols-2 gap-[3px] content-start h-[95px] pl-[19px] pr-[22px] pt-[11px] border-b border-[#dedede]">
        <button className={`col-span-2 ${btn}`}>Edit Image</button>
        <button className={btn}>Copy Style</button>
        <button className={btn}>Paste Style</button>
        <button className={`col-span-2 ${btn}`}>Set as Default Style</button>
      </div>
      <div className="border-b border-[#dedede]">
        <table className="w-full table-fixed border-separate border-spacing-[2px] text-left text-[13px] leading-[21px] text-black">
          <thead>
            <tr>
              <th className="bg-[#e4e4e4]"><span className="flex items-center gap-[6px] pl-[5px]"><svg viewBox="0 0 5 9" className="w-[5px] h-[9px]"><path d="M0 0l5 4.500L0 9z" fill="#9a9a9a" /></svg>Property</span></th>
              <th className="bg-[#e4e4e4] pl-[2px]">Value</th>
            </tr>
          </thead>
        </table>
      </div>
      <div className="mt-auto ml-[123px] w-[100px] h-[8px] bg-[#d8d8d8]" />
    </aside>
  );
}

export default function App() {
  return (
    <div className={`relative flex flex-col w-full h-screen overflow-hidden bg-black ${pageFont}`}>
      <div className="h-[90px] shrink-0" />
      <div className="flex flex-col flex-1 min-h-0 bg-white">
        <BrowserChrome />
        <Header />
        <Toolbar />
        <div className="flex flex-1 min-h-0">
          <Sidebar />
          <div className="grid place-items-center w-[10px] shrink-0 border-r border-[#e2e2e2] bg-[#fcfcfc]">
            <span className="w-[4px] h-[8px] border-x border-[#888]" />
          </div>
          <Workspace />
          <FormatPanel />
        </div>
      </div>
      <div className="flex justify-end h-[90px] shrink-0">
        <svg viewBox="0 0 96 42" className="w-[96px] h-[42px] mr-[46px] -mt-[2px] overflow-visible">
          <path d="M1 40C3 21 18 10 36.500 10S71 21 73.500 40H68C60 31 50 25.500 37 25.500S14 31 9.500 40z" fill="#b3b3b3" />
          <ellipse cx="23" cy="38.500" rx="2.400" ry="3" fill="#c4c4c4" />
          <ellipse cx="53" cy="38.500" rx="2.400" ry="3" fill="#c4c4c4" />
          <path d="M63 20C64 10 71 4 79.500 1c0 4 .5 7 1.500 10-7 0-11 5-14 13z" fill="#b0271b" />
          <path d="M68 26c6-1 10-4 14-7 3 3 7 4 12 4-6 4-14 6-24 6z" fill="#8f1c14" />
        </svg>
      </div>
      <div className={`absolute left-[1145px] top-[90px] w-[587px] h-[101px] flex items-center justify-center bg-black/7 text-white/60 text-[29px] leading-[32px] pointer-events-none ${chromeFont}`}>
        Press
        <span className="grid place-items-center w-[74px] h-[68px] mx-[16px] rounded-[5px] border-2 border-white/50">esc</span>
        to exit full screen
      </div>
    </div>
  );
}
